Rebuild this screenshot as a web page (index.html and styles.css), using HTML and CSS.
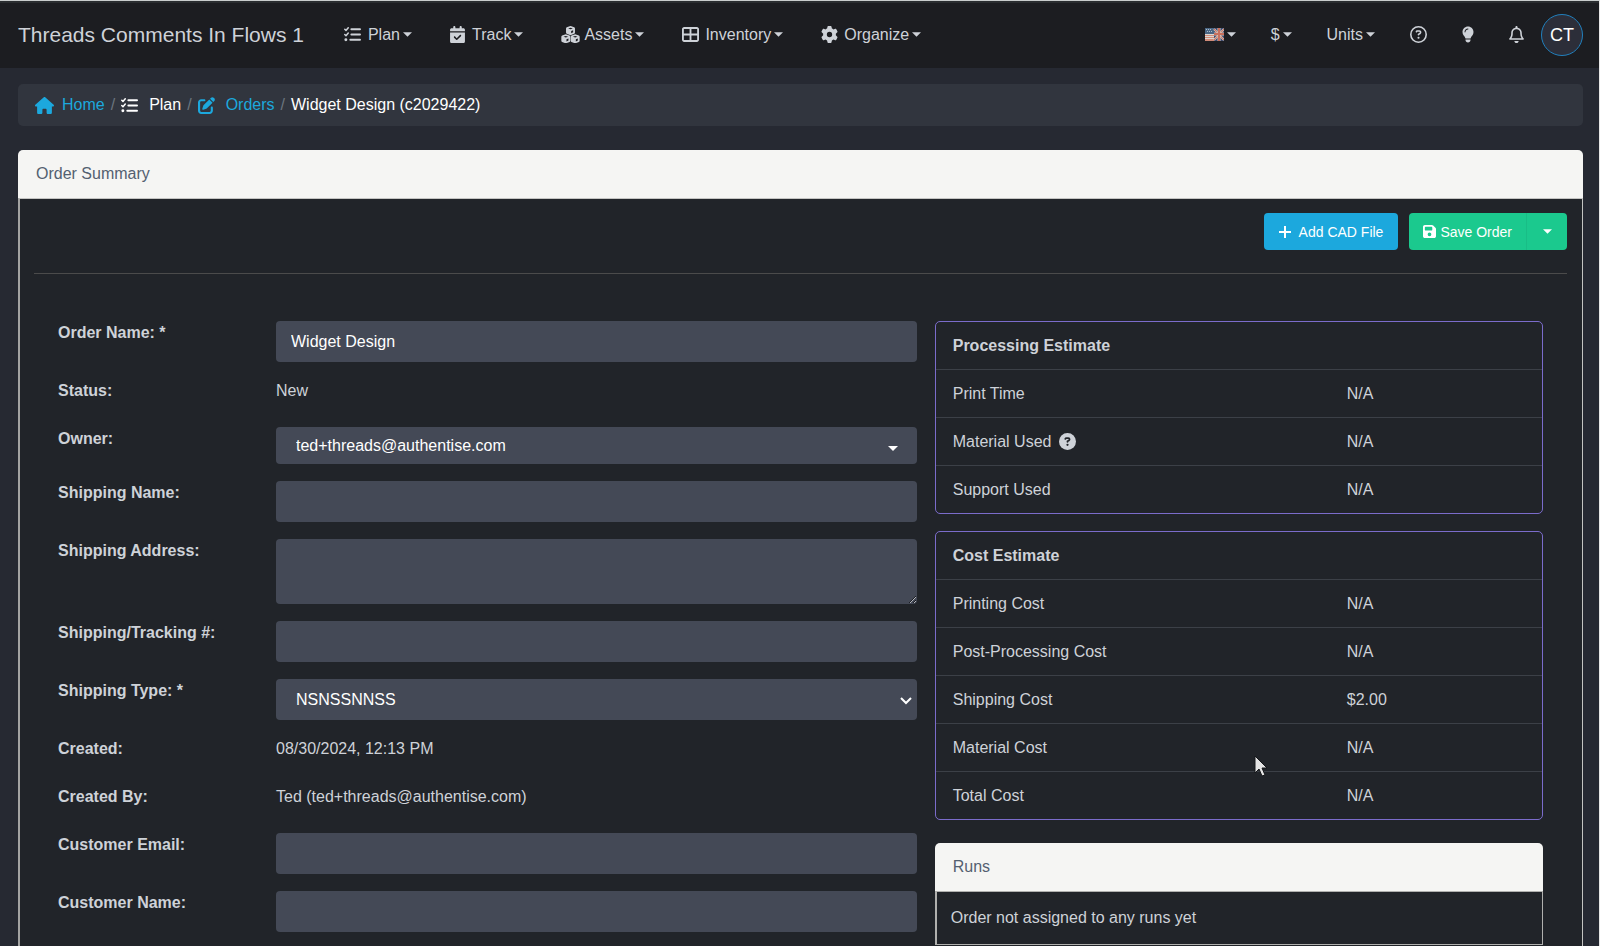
FILE: index.html
```
<!DOCTYPE html>
<html lang="en">
<head>
<meta charset="utf-8">
<title>Widget Design – Order Summary</title>
<link rel="stylesheet" href="styles.css">
</head>
<body>
<svg class="sprite" aria-hidden="true">
  <symbol id="i-list" viewBox="0 0 512 512"><g fill="none" stroke="currentColor" stroke-linecap="round" stroke-linejoin="round"><path stroke-width="46" d="M24 96l36 36 68-80M24 256l36 36 68-80"/><path stroke-width="60" d="M222 96h260M222 256h260M190 416h292"/></g><circle cx="56" cy="416" r="44" fill="currentColor"/></symbol>
  <symbol id="i-calendar" viewBox="0 0 448 512"><path fill="currentColor" d="M128 0c17.700 0 32 14.300 32 32V64H288V32c0-17.700 14.300-32 32-32s32 14.300 32 32V64h48c26.500 0 48 21.500 48 48v48H0V112C0 85.500 21.500 64 48 64H96V32c0-17.700 14.300-32 32-32zM0 192H448V464c0 26.500-21.500 48-48 48H48c-26.500 0-48-21.500-48-48V192zM329 305c9.400-9.400 9.400-24.600 0-33.900s-24.600-9.400-33.900 0l-95 95-47-47c-9.400-9.400-24.600-9.400-33.900 0s-9.400 24.600 0 33.900l64 64c9.400 9.400 24.600 9.400 33.900 0L329 305z"/></symbol>
  <symbol id="i-cubes" viewBox="0 0 576 512"><g fill="currentColor" fill-rule="evenodd"><path id="cube" d="M288 -4l112 42c14 5 24 18 24 33v128c0 14-9 27-22 32l-114 45-114-45c-13-5-22-18-22-32V71c0-15 10-28 24-33zM288 48l-70 26 70 26 70-26zM308 148v68l60-25v-66z"/><use href="#cube" x="-142" y="250"/><use href="#cube" x="142" y="250"/></g></symbol>
  <symbol id="i-table" viewBox="0 0 512 512"><path fill="currentColor" fill-rule="evenodd" d="M64 32h384c35 0 64 29 64 64v320c0 35-29 64-64 64H64c-35 0-64-29-64-64V96c0-35 29-64 64-64zM56 92v136h172V92zM284 92v136h172V92zM56 284v136h172V284zM284 284v136h172V284z"/></symbol>
  <symbol id="i-gear" viewBox="0 0 512 512"><path fill="currentColor" d="M495.900 166.600c3.200 8.700 .5 18.400-6.400 24.600l-43.300 39.400c1.100 8.300 1.700 16.800 1.700 25.400s-.6 17.100-1.700 25.400l43.300 39.400c6.900 6.200 9.600 15.900 6.400 24.600c-4.400 11.900-9.700 23.300-15.800 34.300l-4.700 8.100c-6.600 11-14 21.400-22.100 31.200c-5.900 7.200-15.700 9.600-24.500 6.800l-55.700-17.700c-13.400 10.300-28.200 18.900-44 25.400l-12.500 57.100c-2 9.100-9 16.300-18.200 17.800c-13.800 2.300-28 3.500-42.500 3.500s-28.700-1.200-42.500-3.500c-9.200-1.500-16.200-8.700-18.200-17.800l-12.500-57.100c-15.800-6.500-30.600-15.100-44-25.400L83.100 425.900c-8.800 2.800-18.600 .3-24.500-6.800c-8.100-9.800-15.500-20.200-22.100-31.200l-4.700-8.100c-6.100-11-11.400-22.400-15.800-34.300c-3.200-8.700-.5-18.400 6.400-24.600l43.300-39.400C64.600 273.100 64 264.600 64 256s.6-17.100 1.700-25.400L22.400 191.200c-6.900-6.200-9.600-15.900-6.400-24.600c4.400-11.900 9.700-23.300 15.800-34.300l4.700-8.100c6.600-11 14-21.400 22.100-31.200c5.900-7.200 15.700-9.600 24.500-6.800l55.700 17.700c13.400-10.300 28.200-18.900 44-25.400l12.500-57.100c2-9.100 9-16.300 18.200-17.800C227.300 1.200 241.500 0 256 0s28.700 1.200 42.500 3.500c9.200 1.500 16.200 8.700 18.200 17.800l12.500 57.100c15.800 6.500 30.600 15.100 44 25.400l55.700-17.700c8.800-2.800 18.600-.3 24.500 6.800c8.100 9.800 15.500 20.200 22.100 31.200l4.700 8.100c6.100 11 11.400 22.400 15.800 34.300zM256 336a80 80 0 1 0 0-160 80 80 0 1 0 0 160z"/></symbol>
  <symbol id="i-help" viewBox="0 0 512 512"><path fill="currentColor" d="M464 256A208 208 0 1 0 48 256a208 208 0 1 0 416 0zM0 256a256 256 0 1 1 512 0A256 256 0 1 1 0 256zm169.800-90.700c7.900-22.300 29.100-37.300 52.800-37.300h58.300c34.900 0 63.100 28.300 63.100 63.100c0 22.600-12.100 43.500-31.700 54.800L280 264.400c-.2 13-10.900 23.600-24 23.600c-13.300 0-24-10.700-24-24V250.500c0-8.600 4.600-16.500 12.100-20.800l44.300-25.400c4.700-2.700 7.600-7.700 7.600-13.100c0-8.400-6.800-15.100-15.100-15.100H222.600c-3.400 0-6.400 2.100-7.500 5.300l-.4 1.200c-4.400 12.500-18.200 19-30.600 14.600s-19-18.200-14.600-30.600l.4-1.200zM224 352a32 32 0 1 1 64 0 32 32 0 1 1 -64 0z"/></symbol>
  <symbol id="i-help-solid" viewBox="0 0 512 512"><circle cx="256" cy="256" r="256" fill="currentColor"/><path fill="none" stroke="#212429" stroke-width="54" stroke-linecap="round" stroke-linejoin="round" d="M190 178c6-16 20-25 36-25h54c22 0 38 17 38 38 0 14-7 26-19 33l-43 25v18"/><circle cx="256" cy="354" r="34" fill="#212429"/></symbol>
  <symbol id="i-bulb" viewBox="0 0 384 512"><path fill="currentColor" d="M272 384c9.600-31.900 29.500-59.100 49.200-86.200c5.200-7.100 10.400-14.200 15.400-21.400c19.800-28.500 31.400-63 31.400-100.300C368 78.800 289.200 0 192 0S16 78.800 16 176c0 37.300 11.600 71.900 31.400 100.300c5 7.200 10.200 14.300 15.400 21.400c19.800 27.100 39.700 54.400 49.200 86.200H272zM192 512c44.200 0 80-35.800 80-80V416H112v16c0 44.200 35.800 80 80 80zM112 176c0 8.800-7.200 16-16 16s-16-7.200-16-16c0-61.900 50.100-112 112-112c8.800 0 16 7.200 16 16s-7.200 16-16 16c-44.200 0-80 35.800-80 80z"/></symbol>
  <symbol id="i-bell" viewBox="0 0 448 512"><path fill="currentColor" d="M224 0c-17.700 0-32 14.300-32 32V49.900C119.500 61.400 64 124.200 64 200v33.400c0 45.400-15.500 89.500-43.800 124.900L5.300 377c-5.800 7.200-6.900 17.100-2.900 25.400S14.800 416 24 416H424c9.200 0 17.600-5.300 21.600-13.600s2.900-18.200-2.900-25.400l-14.900-18.600C399.500 322.900 384 278.800 384 233.400V200c0-75.800-55.500-138.600-128-150.100V32c0-17.700-14.300-32-32-32zm0 96h8c57.400 0 104 46.600 104 104v33.400c0 47.900 13.900 94.600 39.700 134.600H72.300C98.100 328 112 281.300 112 233.400V200c0-57.400 46.600-104 104-104h8zm64 352H224 160c0 17 6.700 33.300 18.700 45.300s28.300 18.700 45.300 18.700s33.300-6.700 45.300-18.700s18.700-28.300 18.700-45.300z"/></symbol>
  <symbol id="i-home" viewBox="0 0 576 512"><path fill="currentColor" d="M575.800 255.500c0 18-15 32.100-32 32.100h-32l.7 160.200c0 2.700-.2 5.400-.5 8.100V472c0 22.100-17.900 40-40 40H392c-22.100 0-40-17.900-40-40V384c0-17.700-14.300-32-32-32H256c-17.700 0-32 14.300-32 32v88c0 22.100-17.900 40-40 40H104c-22.100 0-40-17.900-40-40V287.600H32c-18 0-32-14-32-32.100c0-9 3-17 10-24L266.400 8c7-7 15-8 22-8s15 2 21 7L564.800 231.500c8 7 12 15 11 24z"/></symbol>
  <symbol id="i-edit" viewBox="0 0 512 512"><path fill="currentColor" d="M471.600 21.700c-21.900-21.900-57.300-21.900-79.200 0L362.300 51.700l97.900 97.900 30.100-30.100c21.900-21.900 21.900-57.300 0-79.200L471.600 21.700zm-299.200 220c-6.100 6.100-10.800 13.600-13.500 21.900l-29.600 88.800c-2.900 8.600-.6 18.100 5.800 24.600s15.900 8.700 24.600 5.800l88.800-29.600c8.200-2.700 15.700-7.400 21.900-13.500L437.700 172.300 339.700 74.300 172.400 241.700zM96 64C43 64 0 107 0 160V416c0 53 43 96 96 96H352c53 0 96-43 96-96V320c0-17.700-14.300-32-32-32s-32 14.300-32 32v96c0 17.700-14.300 32-32 32H96c-17.700 0-32-14.300-32-32V160c0-17.700 14.300-32 32-32h96c17.700 0 32-14.300 32-32s-14.300-32-32-32H96z"/></symbol>
  <symbol id="i-save" viewBox="0 0 448 448"><path fill="currentColor" d="M64 0C28.700 0 0 28.700 0 64V384c0 35.300 28.700 64 64 64H384c35.300 0 64-28.700 64-64V141.300c0-17-6.700-33.300-18.700-45.300L352 18.700C340 6.700 323.700 0 306.700 0H64zm0 96c0-17.700 14.300-32 32-32H288c17.700 0 32 14.300 32 32v64c0 17.700-14.300 32-32 32H96c-17.700 0-32-14.300-32-32V96zM224 256a64 64 0 1 1 0 128 64 64 0 1 1 0-128z"/></symbol>
  <symbol id="i-caret" viewBox="0 0 10 5"><path fill="currentColor" d="M0 0h10L5 5z"/></symbol>
  <symbol id="i-chevron" viewBox="0 0 12 8"><path fill="none" stroke="currentColor" stroke-width="2" d="M1 1l5 5 5-5"/></symbol>
  <symbol id="i-flag" viewBox="0 0 19 13">
    <path fill="#dcd6d0" d="M0 0h19v13H0z"/>
    <path fill="#d08a78" d="M0 7h9v1H0zM0 9h9v1H0zM0 11h10v2H0z"/>
    <path fill="#4a6684" d="M0 0h9v6H0z"/><path fill="#a9bccb" d="M1 1h1v1H1zM3 1h1v1H3zM5 1h1v1H5zM2 3h1v1H2zM4 3h1v1H4zM6 3h1v1H6z"/>
    <path fill="#3b4a70" d="M9 0h10v13H9z"/>
    <path stroke="#dcc4b8" stroke-width="2" d="M9 1l10 11M9 12L19 1"/>
    <path stroke="#c8705e" stroke-width="1" d="M9 1l10 11M9 12L19 1"/>
    <path stroke="#dcc4b8" stroke-width="3" d="M14 0v13M9 6h10"/><path stroke="#c8705e" stroke-width="2" d="M14 0v13M9 6h10"/>
  </symbol>
</svg>

<header class="navbar">
  <a class="brand" href="#">Threads Comments In Flows 1</a>
  <nav class="menu" aria-label="Main">
    <button class="nav-item"><svg class="ico i17 lead-7"><use href="#i-list"/></svg>Plan<svg class="caret"><use href="#i-caret"/></svg></button>
    <button class="nav-item"><svg class="ico i15 lead-7"><use href="#i-calendar"/></svg>Track<svg class="caret"><use href="#i-caret"/></svg></button>
    <button class="nav-item"><svg class="ico i19 lead-4"><use href="#i-cubes"/></svg>Assets<svg class="caret"><use href="#i-caret"/></svg></button>
    <button class="nav-item"><svg class="ico i17 lead-6"><use href="#i-table"/></svg>Inventory<svg class="caret"><use href="#i-caret"/></svg></button>
    <button class="nav-item"><svg class="ico i17 lead-6"><use href="#i-gear"/></svg>Organize<svg class="caret"><use href="#i-caret"/></svg></button>
  </nav>
  <div class="tools">
    <button class="nav-item" aria-label="Language"><svg class="flag"><use href="#i-flag"/></svg><svg class="caret"><use href="#i-caret"/></svg></button>
    <button class="nav-item">$<svg class="caret"><use href="#i-caret"/></svg></button>
    <button class="nav-item">Units<svg class="caret"><use href="#i-caret"/></svg></button>
    <button class="nav-item" aria-label="Help"><svg class="ico i17"><use href="#i-help"/></svg></button>
    <button class="nav-item" aria-label="Tips"><svg class="ico i12"><use href="#i-bulb"/></svg></button>
    <button class="nav-item" aria-label="Notifications"><svg class="ico i15"><use href="#i-bell"/></svg></button>
    <button class="avatar">CT</button>
  </div>
</header>

<main class="page">
  <nav class="breadcrumb" aria-label="Breadcrumb">
    <a href="#"><svg class="ico i19"><use href="#i-home"/></svg>Home</a><span class="sep">/</span>
    <span class="crumb wide"><svg class="ico i17"><use href="#i-list"/></svg>Plan</span><span class="sep">/</span>
    <a class="wide" href="#"><svg class="ico i17"><use href="#i-edit"/></svg>Orders</a><span class="sep">/</span>
    <span class="crumb">Widget Design (c2029422)</span>
  </nav>

  <section class="card">
    <h1 class="card-head">Order Summary</h1>
    <div class="card-body">
      <div class="actions">
        <button class="btn btn-blue"><svg class="plus" viewBox="0 0 12 12"><path stroke="currentColor" stroke-width="2" d="M6 0v12M0 6h12"/></svg>Add CAD File</button>
        <div class="btn-group">
          <button class="btn btn-green"><svg class="ico i13"><use href="#i-save"/></svg>Save Order</button>
          <button class="btn btn-green btn-split" aria-label="More save options"><svg class="caret"><use href="#i-caret"/></svg></button>
        </div>
      </div>
      <div class="columns">
        <form class="form">
          <div class="row"><label for="name">Order Name: *</label><input id="name" class="field" type="text" value="Widget Design"></div>
          <div class="row"><span class="label">Status:</span><span>New</span></div>
          <div class="row"><label for="owner">Owner:</label><div class="select select-short"><select id="owner" class="field"><option>ted+threads@authentise.com</option></select><svg class="select-caret"><use href="#i-caret"/></svg></div></div>
          <div class="row"><label for="sname">Shipping Name:</label><input id="sname" class="field" type="text"></div>
          <div class="row"><label for="saddr">Shipping Address:</label><textarea id="saddr" class="field"></textarea></div>
          <div class="row"><label for="track">Shipping/Tracking #:</label><input id="track" class="field" type="text"></div>
          <div class="row"><label for="stype">Shipping Type: *</label><div class="select"><select id="stype" class="field"><option>NSNSSNNSS</option></select><svg class="select-chevron"><use href="#i-chevron"/></svg></div></div>
          <div class="row"><span class="label">Created:</span><span>08/30/2024, 12:13 PM</span></div>
          <div class="row"><span class="label">Created By:</span><span>Ted (ted+threads@authentise.com)</span></div>
          <div class="row"><label for="email">Customer Email:</label><input id="email" class="field" type="text"></div>
          <div class="row"><label for="cname">Customer Name:</label><input id="cname" class="field" type="text"></div>
        </form>
        <div class="side">
          <div class="estimate">
            <table>
              <colgroup><col class="col-name"><col></colgroup>
              <thead><tr><th colspan="2">Processing Estimate</th></tr></thead>
              <tbody>
                <tr><td>Print Time</td><td>N/A</td></tr>
                <tr><td><span class="with-help">Material Used<svg class="ico i17"><use href="#i-help-solid"/></svg></span></td><td>N/A</td></tr>
                <tr><td>Support Used</td><td>N/A</td></tr>
              </tbody>
            </table>
          </div>
          <div class="estimate">
            <table>
              <colgroup><col class="col-name"><col></colgroup>
              <thead><tr><th colspan="2">Cost Estimate</th></tr></thead>
              <tbody>
                <tr><td>Printing Cost</td><td>N/A</td></tr>
                <tr><td>Post-Processing Cost</td><td>N/A</td></tr>
                <tr><td>Shipping Cost</td><td>$2.00</td></tr>
                <tr><td>Material Cost</td><td>N/A</td></tr>
                <tr><td>Total Cost</td><td>N/A</td></tr>
              </tbody>
            </table>
          </div>
          <section class="runs">
            <h2 class="runs-head">Runs</h2>
            <p class="runs-body">Order not assigned to any runs yet</p>
          </section>
        </div>
      </div>
    </div>
  </section>
</main>
<svg class="pointer" viewBox="0 0 14 22" aria-hidden="true"><path fill="#e4e4e4" stroke="#15171a" stroke-width="1" d="M1 1v17l4-4 3 7 3-1-3-7h5z"/></svg>
</body>
</html>
```
FILE: styles.css
```
* { box-sizing: border-box; }

body {
  margin: 0;
  min-height: 100vh;
  display: flex;
  flex-direction: column;
  border-top: 1px solid #c9cdcd;
  border-right: 1px solid #e6e6e6;
  background: #262932;
  color: #ced2d8;
  font: 16px/22px "Liberation Sans", Arial, sans-serif;
}

.sprite { display: none; }
svg { display: block; flex: none; }
button, input, select, textarea { font: inherit; color: inherit; }
button { border: 0; background: none; padding: 0; cursor: pointer; }
a { text-decoration: none; }

.ico { height: 17px; }
.i12 { width: 12px; }
.i13 { width: 13px; height: 13px; }
.i15 { width: 15px; }
.i17 { width: 17px; }
.i19 { width: 19px; }
.caret { width: 9px; height: 5px; margin-left: 3px; }

/* Top bar */
.navbar {
  display: flex;
  align-items: center;
  min-height: 67px;
  padding: 0 16px 2px 18px;
  border-top: 2px solid #2a2d30;
  background: #1c1d21;
}
.brand { color: #ced2d8; font-size: 21px; line-height: 28px; white-space: nowrap; }
.menu { display: flex; gap: 38px; margin-left: 40px; }
.nav-item { display: flex; align-items: center; white-space: nowrap; }
.lead-4 { margin-right: 4px; }
.lead-6 { margin-right: 6px; }
.lead-7 { margin-right: 7px; }
.tools { display: flex; align-items: center; gap: 35px; margin-left: auto; }
.flag { width: 19px; height: 13px; }
.avatar {
  width: 42px;
  height: 42px;
  margin-left: -18px;
  border: 1px solid #2180bd;
  border-radius: 50%;
  background: #2c2e39;
  color: #fff;
  font-size: 18px;
}

/* Page */
.page { flex: 1; display: flex; flex-direction: column; padding: 16px 16px 0 18px; }
.breadcrumb {
  display: flex;
  align-items: center;
  min-height: 42px;
  margin-bottom: 24px;
  padding: 0 17px;
  border-radius: 5px;
  background: #31353e;
  color: #fff;
}
.breadcrumb a, .crumb { display: flex; align-items: center; gap: 8px; }
.breadcrumb a { color: #1ca8dd; }
.breadcrumb .wide { gap: 11px; }
.sep { padding: 0 6px; color: #6c757f; }

.card { flex: 1; display: flex; flex-direction: column; }
.card-head, .runs-head {
  margin: 0;
  padding: 13px 18px;
  border-radius: 5px 5px 0 0;
  background: #f5f5f3;
  color: #536070;
  font-size: 16px;
  font-weight: 400;
  line-height: 22px;
}
.card-body {
  flex: 1;
  padding: 14px 15px 0 14px;
  border: 1px solid #c4c4c2;
  border-left: 2px solid #a3a3a2;
  border-bottom: 0;
  background: #212429;
}
.actions {
  display: flex;
  justify-content: flex-end;
  gap: 11px;
  padding-bottom: 23px;
  border-bottom: 1px solid #4b4b4b;
}
.btn {
  display: flex;
  align-items: center;
  min-height: 37px;
  padding: 0 14px;
  border-radius: 4px;
  color: #fff;
  font-size: 14px;
}
.btn-blue { gap: 8px; padding: 0 15px; background: #1ca8dd; }
.plus { width: 12px; height: 12px; }
.btn-group { display: flex; }
.btn-green { gap: 4px; border-radius: 4px 0 0 4px; background: #1bc98e; }
.btn-split { padding: 0 15px 0 16px; border-left: 1px solid #19bd86; border-radius: 0 4px 4px 0; }
.btn-split .caret { margin-left: 0; }

.columns {
  display: grid;
  grid-template-columns: 24fr 17fr;
  gap: 18px;
  align-items: start;
  padding: 47px 24px 0 24px;
}

/* Order form */
.form { display: grid; gap: 17px; line-height: 24px; }
.row { display: grid; grid-template-columns: 218px 1fr; align-items: start; min-height: 31px; }
label, .label { font-weight: 700; }
.field {
  display: block;
  width: 100%;
  height: 41px;
  margin: 0;
  padding: 0 15px;
  border: 0;
  border-radius: 4px;
  background: #444956;
  color: #fff;
  outline: 0;
}
textarea.field { height: 65px; padding: 9px 15px; resize: vertical; }
.select { position: relative; }
.select .field { appearance: none; padding: 0 20px; }
.select-short .field { height: 37px; }
.select-caret { position: absolute; right: 19px; top: 19px; width: 10px; height: 5px; color: #fff; pointer-events: none; }
.select-chevron { position: absolute; right: 5px; top: 18px; width: 12px; height: 8px; color: #fff; pointer-events: none; }

/* Estimates */
.estimate { margin-bottom: 17px; border: 1px solid #7b6ccb; border-radius: 5px; }
.estimate table { width: 100%; border-collapse: collapse; table-layout: fixed; }
.col-name { width: 65%; }
.estimate th, .estimate td { padding: 12px 17px; border-bottom: 1px solid #3c4047; text-align: left; line-height: 23px; }
.estimate tr:last-child td { border-bottom: 0; }
.estimate thead th { border-bottom: 1px solid #3c4047; }
.with-help { display: flex; align-items: center; gap: 8px; }

.runs { margin-top: 23px; }
.runs-body {
  margin: 0;
  padding: 15px 14px;
  border: 1px solid #b0b0ae;
  border-left-width: 2px;
}

.pointer { position: absolute; left: 1254px; top: 755px; width: 14px; height: 22px; }
```
